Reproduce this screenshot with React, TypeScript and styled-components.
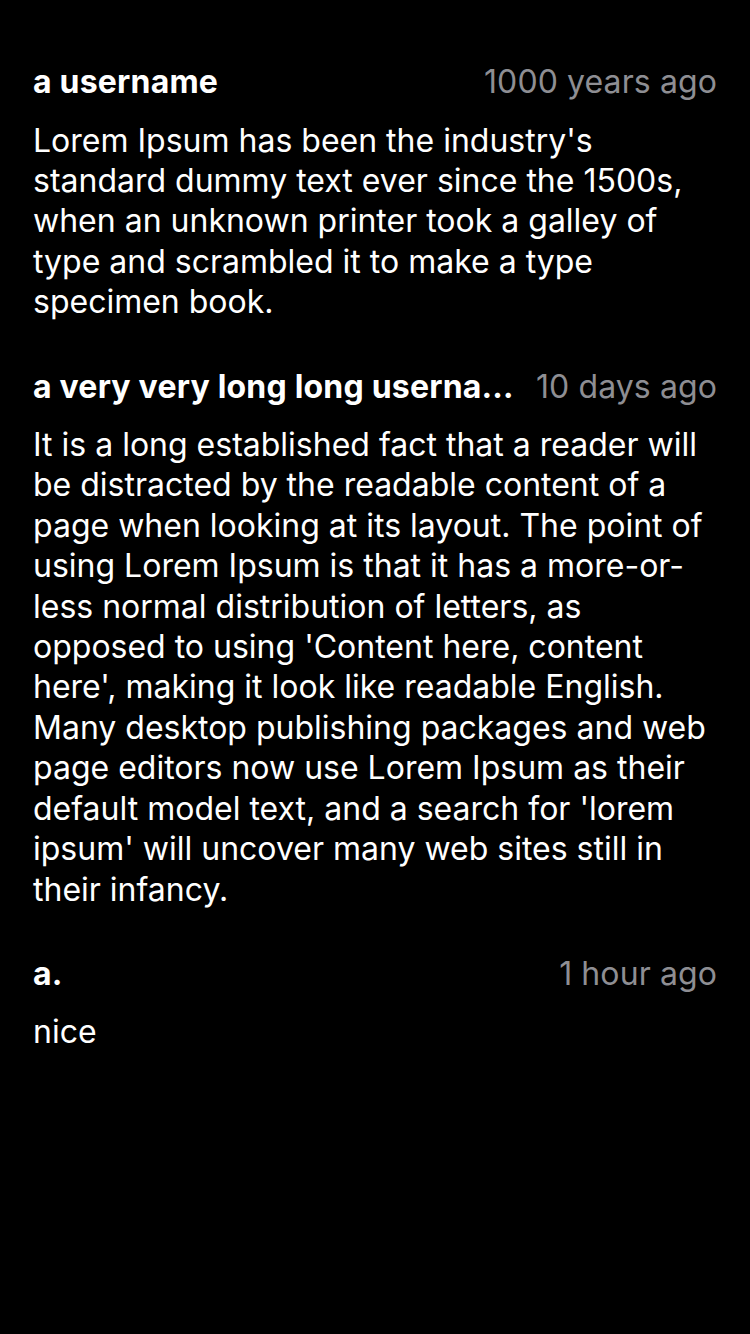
import React from "react";
import styled, { createGlobalStyle } from "styled-components";

const Global = createGlobalStyle`
  html, body { margin: 0; padding: 0; background: #000; }
  body { font-family: Inter, "Noto Sans", sans-serif; -webkit-font-smoothing: antialiased; }
`;

const Page = styled.div`
  min-height: 1334px;
  background: #000;
  padding: 62px 33px 0 33px;
  box-sizing: border-box;
  display: flex;
  flex-direction: column;
  gap: 44px;
`;

const Comment = styled.div`
  display: flex;
  flex-direction: column;
  gap: 18.5px;
`;

const Header = styled.div`
  display: flex;
  align-items: center;
  justify-content: space-between;
  gap: 20px;
  height: 40px;
`;

const Name = styled.div`
  color: #fff;
  font-size: 32px;
  font-weight: 700;
  letter-spacing: 0.2px;
  line-height: 40px;
  white-space: nowrap;
  overflow: hidden;
  text-overflow: ellipsis;
  min-width: 0;
`;

const Time = styled.div`
  color: #8e8e93;
  font-size: 32px;
  font-weight: 400;
  letter-spacing: 0.1px;
  line-height: 40px;
  white-space: nowrap;
  flex-shrink: 0;
`;

const Body = styled.p`
  margin: 0;
  color: #fff;
  font-size: 32px;
  font-weight: 400;
  letter-spacing: 0;
  line-height: 40.4px;
`;

const comments = [
  {
    name: "a username",
    time: "1000 years ago",
    text: "Lorem Ipsum has been the industry's standard dummy text ever since the 1500s, when an unknown printer took a galley of type and scrambled it to make a type specimen book.",
  },
  {
    name: "a very very long long username",
    time: "10 days ago",
    text: "It is a long established fact that a reader will be distracted by the readable content of a page when looking at its layout. The point of using Lorem Ipsum is that it has a more-or-less normal distribution of letters, as opposed to using 'Content here, content here', making it look like readable English. Many desktop publishing packages and web page editors now use Lorem Ipsum as their default model text, and a search for 'lorem ipsum' will uncover many web sites still in their infancy.",
  },
  { name: "a.", time: "1 hour ago", text: "nice" },
];

export default function App() {
  return (
    <>
      <Global />
      <Page>
        {comments.map((c, i) => (
          <Comment key={i}>
            <Header>
              <Name>{c.name}</Name>
              <Time>{c.time}</Time>
            </Header>
            <Body>{c.text}</Body>
          </Comment>
        ))}
      </Page>
    </>
  );
}
